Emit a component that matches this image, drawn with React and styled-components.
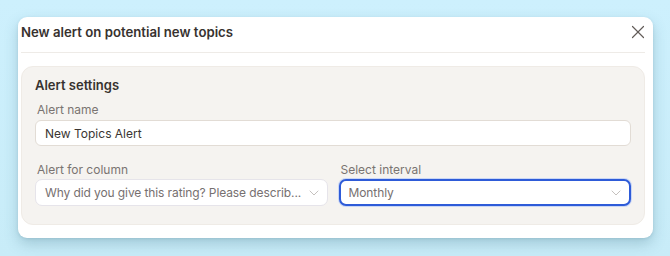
import React from "react"
import styled, { createGlobalStyle } from "styled-components"
import { X, ChevronDown } from "lucide-react"

const GlobalStyle = createGlobalStyle`
  html, body {
    margin: 0;
    padding: 0;
  }
  body {
    background: linear-gradient(180deg, #cdf0fd 0%, #c8ecf8 100%);
    height: 256px;
    overflow: hidden;
    font-family: Inter, "Noto Sans", sans-serif;
    -webkit-font-smoothing: antialiased;
  }
`

const App = () => {
  return (
    <Page>
      <GlobalStyle />
      <Modal>
        <Header>
          <h2>New alert on potential new topics</h2>
          <CloseButton aria-label="Close">
            <X size={22} strokeWidth={1.3} />
          </CloseButton>
        </Header>
        <Panel>
          <PanelTitle>Alert settings</PanelTitle>
          <Field>
            <Label>Alert name</Label>
            <Input defaultValue="New Topics Alert" />
          </Field>
          <Row>
            <Field>
              <Label>Alert for column</Label>
              <Select>
                <span>Why did you give this rating? Please describ...</span>
                <ChevronDown size={16} strokeWidth={1.3} />
              </Select>
            </Field>
            <Field>
              <Label>Select interval</Label>
              <Select $focused>
                <span>Monthly</span>
                <ChevronDown size={16} strokeWidth={1.3} />
              </Select>
            </Field>
          </Row>
        </Panel>
      </Modal>
    </Page>
  )
}

const Page = styled.div`
  padding: 17px 17px 0 18px;
`

const Modal = styled.div`
  width: 635px;
  box-sizing: border-box;
  background: #ffffff;
  border-radius: 9px;
  padding: 0 8px 13px 3px;
  box-shadow: 0 6px 14px rgba(60, 110, 130, 0.28), 0 1px 3px rgba(60, 110, 130, 0.15);
`

const Header = styled.div`
  display: flex;
  align-items: center;
  justify-content: space-between;
  height: 29px;
  padding-bottom: 6px;
  border-bottom: 1px solid #eeebe7;
  margin-bottom: 13px;
  h2 {
    margin: 0;
    font-size: 13.2px;
    font-weight: 600;
    color: #37322f;
  }
`

const CloseButton = styled.button`
  display: flex;
  align-items: center;
  justify-content: center;
  width: 22px;
  height: 22px;
  padding: 0;
  margin-right: -3.5px;
  border: none;
  background: none;
  color: #625c58;
  cursor: pointer;
`

const Panel = styled.div`
  background: #f5f3f0;
  border: 1px solid #efebe6;
  border-radius: 12px;
  padding: 9px 13px 18px;
  display: flex;
  flex-direction: column;
`

const PanelTitle = styled.h3`
  margin: 0 0 8px;
  font-size: 13px;
  line-height: 18px;
  font-weight: 600;
  color: #37322f;
`

const Field = styled.div`
  display: flex;
  flex-direction: column;
  gap: 2px;
  min-width: 0;
`

const Label = styled.label`
  font-size: 12px;
  line-height: 16px;
  color: #7a7471;
  padding-left: 2px;
`

const Input = styled.input`
  height: 26px;
  box-sizing: border-box;
  border: 1px solid #e2dcd5;
  border-radius: 6px;
  background: #fff;
  padding: 0 9px;
  font-family: inherit;
  font-size: 12px;
  color: #3a3532;
  outline: none;
`

const Row = styled.div`
  display: grid;
  grid-template-columns: 1fr 1fr;
  gap: 11px;
  margin-top: 16px;
  ${Field} {
    gap: 1px;
  }
`

const Select = styled.div`
  height: 27px;
  box-sizing: border-box;
  display: flex;
  align-items: center;
  justify-content: space-between;
  gap: 2px;
  background: #fff;
  border-radius: 7px;
  padding: 0 5px 0 ${(p) => (p.$focused ? "8px" : "9px")};
  border: ${(p) => (p.$focused ? "2px solid #2e5bd8" : "1px solid #e6e4ea")};
  box-shadow: ${(p) => (p.$focused ? "0 0 0 1px #c9d6f5" : "none")};
  font-size: 12px;
  color: #767070;
  span {
    white-space: nowrap;
    letter-spacing: -0.1px;
  }
  svg {
    flex-shrink: 0;
    color: #bcb7b4;
  }
`

export default App
